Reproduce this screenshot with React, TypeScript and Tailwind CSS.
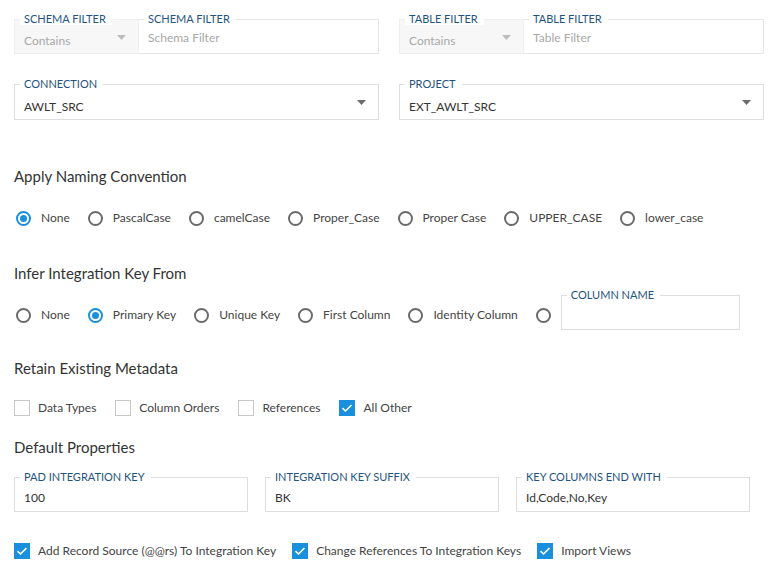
import React from 'react';

const FONT = "font-['Lato','Open_Sans',sans-serif]";

const Caret = ({ light }: { light?: boolean }) => (
  <svg width="9" height="5" viewBox="0 0 9 5" className="shrink-0">
    <path d="M0 0 H9 L4.5 5 Z" fill={light ? '#bdbdbd' : '#6b6b6b'} />
  </svg>
);

const Legend = ({ children }: { children: React.ReactNode }) => (
  <legend className="pl-[4px] pr-[6px] text-[11px] leading-[12px] uppercase text-[#1f5480] bg-white">
    {children}
  </legend>
);

const SelectField = ({ label, value }: { label: string; value: string }) => (
  <fieldset className="border border-[#dedede] pl-[5px] pr-[12px]">
    <Legend>{label}</Legend>
    <div className="flex items-start justify-between pl-[4px] pt-[9px] pb-[4px]">
      <span className="text-[12px] leading-4 text-[#333]">{value}</span>
      <span className="mt-[1px]">
        <Caret />
      </span>
    </div>
  </fieldset>
);

const FilterGroup = ({ label, placeholder }: { label: string; placeholder: string }) => (
  <div className="flex">
    <fieldset className="w-[125px] shrink-0 border border-[#efefef] bg-[#f7f7f7] pl-[5px] pr-[12px]">
      <Legend>{label}</Legend>
      <div className="flex items-start justify-between pl-[4px] pt-[8px] pb-[4px]">
        <span className="text-[12px] leading-4 text-[#a8a8a8]">Contains</span>
        <span className="mt-[2px]">
          <Caret light />
        </span>
      </div>
    </fieldset>
    <fieldset className="flex-1 border border-l-0 border-[#e6e6e6] pl-[5px]">
      <Legend>{label}</Legend>
      <div className="pl-[4px] pt-[5px] pb-[7px] text-[12px] leading-4 text-[#a8a8a8]">{placeholder}</div>
    </fieldset>
  </div>
);

const TextField = ({ label, value }: { label: string; value?: string }) => (
  <fieldset className="border border-[#dedede] pl-[5px]">
    <Legend>{label}</Legend>
    <div className="h-[28px] pl-[4px] pt-[7px] text-[12px] leading-4 text-[#333]">{value}</div>
  </fieldset>
);

const Radio = ({ label, checked }: { label?: string; checked?: boolean }) => (
  <label className="flex items-center gap-[10px] h-5">
    <span
      className={`w-[15px] h-[15px] rounded-full border-2 flex items-center justify-center ${
        checked ? 'border-[#1a8fdd]' : 'border-[#6b6b6b]'
      }`}
    >
      {checked && <span className="w-[7px] h-[7px] rounded-full bg-[#1a8fdd]" />}
    </span>
    {label && <span className="text-[12px] text-[#444]">{label}</span>}
  </label>
);

const Checkbox = ({ label, checked }: { label: string; checked?: boolean }) => (
  <label className="flex items-center gap-[8px] h-5">
    {checked ? (
      <span className="w-4 h-4 bg-[#1a8fdd] flex items-center justify-center">
        <svg width="16" height="16" viewBox="0 0 16 16">
          <polyline points="3.5,8.2 6.5,11 12.5,5" fill="none" stroke="white" strokeWidth="1.6" />
        </svg>
      </span>
    ) : (
      <span className="w-4 h-4 border border-[#c8c8c8] bg-white" />
    )}
    <span className="text-[12px] text-[#444]">{label}</span>
  </label>
);

const Heading = ({ children }: { children: React.ReactNode }) => (
  <h2 className="text-[15px] leading-5 text-[#333]">{children}</h2>
);

export default function App() {
  return (
    <div className={`${FONT} bg-white w-[781px] h-[588px] pl-[14px] pr-[17px] pt-[13px]`}>
      <div className="grid grid-cols-2 gap-5">
        <FilterGroup label="Schema Filter" placeholder="Schema Filter" />
        <FilterGroup label="Table Filter" placeholder="Table Filter" />
      </div>

      <div className="grid grid-cols-2 gap-5 mt-[24px]">
        <SelectField label="Connection" value="AWLT_SRC" />
        <SelectField label="Project" value="EXT_AWLT_SRC" />
      </div>

      <div className="mt-[46px]">
        <Heading>Apply Naming Convention</Heading>
        <div className="flex gap-[18px] ml-[2px] mt-[22px]">
          <Radio label="None" checked />
          <Radio label="PascalCase" />
          <Radio label="camelCase" />
          <Radio label="Proper_Case" />
          <Radio label="Proper Case" />
          <Radio label="UPPER_CASE" />
          <Radio label="lower_case" />
        </div>
      </div>

      <div className="mt-[35px]">
        <Heading>Infer Integration Key From</Heading>
        <div className="flex items-end ml-[2px] mt-[6px]">
          <div className="flex gap-[18px] pb-[5px]">
            <Radio label="None" />
            <Radio label="Primary Key" checked />
            <Radio label="Unique Key" />
            <Radio label="First Column" />
            <Radio label="Identity Column" />
            <Radio />
          </div>
          <div className="w-[179px] ml-[10px]">
            <TextField label="Column Name" />
          </div>
        </div>
      </div>

      <div className="mt-[28px]">
        <Heading>Retain Existing Metadata</Heading>
        <div className="flex gap-[19px] mt-[20px]">
          <Checkbox label="Data Types" />
          <Checkbox label="Column Orders" />
          <Checkbox label="References" />
          <Checkbox label="All Other" checked />
        </div>
      </div>

      <div className="mt-[19px]">
        <Heading>Default Properties</Heading>
        <div className="grid grid-cols-3 gap-[17px] w-[736px] mt-[14px]">
          <TextField label="Pad Integration Key" value="100" />
          <TextField label="Integration Key Suffix" value="BK" />
          <TextField label="Key Columns End With" value="Id,Code,No,Key" />
        </div>
        <div className="flex gap-4 mt-[29px]">
          <Checkbox label="Add Record Source (@@rs) To Integration Key" checked />
          <Checkbox label="Change References To Integration Keys" checked />
          <Checkbox label="Import Views" checked />
        </div>
      </div>
    </div>
  );
}
